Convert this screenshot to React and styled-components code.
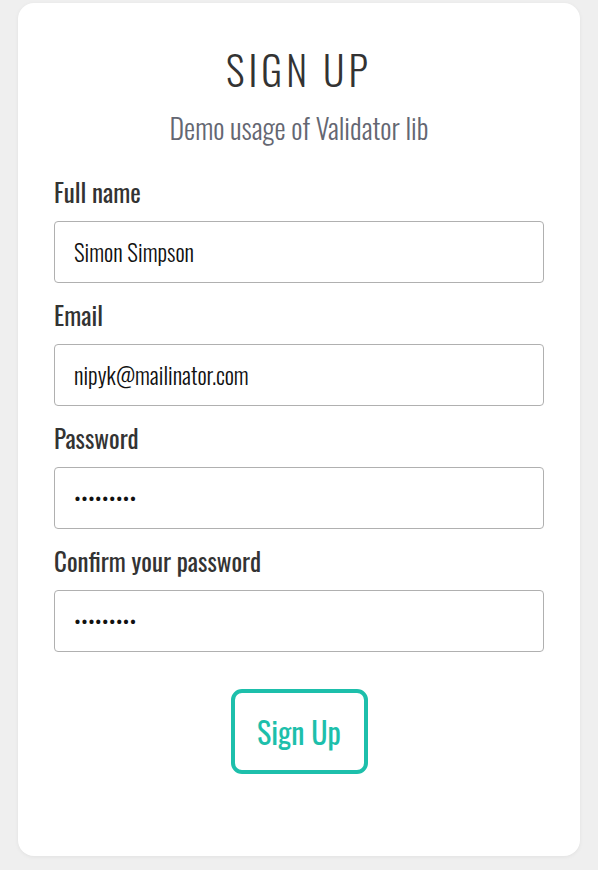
import React from "react";
import styled, { createGlobalStyle } from "styled-components";

const Global = createGlobalStyle`
  html, body { margin: 0; padding: 0; background: #efefef; }
  body { font-family: 'Oswald', 'Roboto Condensed', sans-serif; }
  * { box-sizing: border-box; }
`;

const Page = styled.div`
  padding: 3px 18px 14px;
`;

const Card = styled.form`
  background: #fff;
  border-radius: 16px;
  box-shadow: 0 1px 4px rgba(0, 0, 0, 0.06);
  padding: 38px 36px 82px;
  display: flex;
  flex-direction: column;
`;

const Title = styled.h1`
  margin: 0;
  text-align: center;
  font-weight: 300;
  font-size: 40px;
  line-height: 56px;
  letter-spacing: 4px;
  color: #333;
`;

const Subtitle = styled.p`
  margin: 11px 0 28px;
  text-align: center;
  font-weight: 300;
  font-size: 28px;
  line-height: 40px;
  color: #646772;
`;

const Field = styled.div`
  display: flex;
  flex-direction: column;
  gap: 13px;
  margin-bottom: 16px;
`;

const Label = styled.label`
  font-size: 25px;
  font-weight: 400;
  line-height: 32px;
  color: #333;
`;

const Input = styled.input`
  height: 62px;
  width: 100%;
  border: 1px solid #b0b0b0;
  border-radius: 4px;
  padding: 0 19px;
  font-family: inherit;
  font-size: 23px;
  font-weight: 300;
  color: #111;
  background: #fff;
  outline: none;
`;

const Actions = styled.div`
  display: flex;
  justify-content: center;
  margin-top: 21px;
`;

const Button = styled.button`
  width: 137px;
  height: 85px;
  border: 4px solid #1dbfab;
  border-radius: 11px;
  background: #fff;
  color: #1dbfab;
  font-family: inherit;
  font-size: 30px;
  font-weight: 400;
  cursor: pointer;
`;

const fields = [
  { id: "name", label: "Full name", type: "text", value: "Simon Simpson" },
  { id: "email", label: "Email", type: "email", value: "nipyk@mailinator.com" },
  { id: "password", label: "Password", type: "password", value: "123456789" },
  { id: "confirm", label: "Confirm your password", type: "password", value: "123456789" },
];

export default function App() {
  return (
    <>
      <Global />
      <Page>
        <Card onSubmit={(e) => e.preventDefault()}>
          <Title>SIGN UP</Title>
          <Subtitle>Demo usage of Validator lib</Subtitle>
          {fields.map((f) => (
            <Field key={f.id}>
              <Label htmlFor={f.id}>{f.label}</Label>
              <Input id={f.id} type={f.type} defaultValue={f.value} />
            </Field>
          ))}
          <Actions>
            <Button type="submit">Sign Up</Button>
          </Actions>
        </Card>
      </Page>
    </>
  );
}
